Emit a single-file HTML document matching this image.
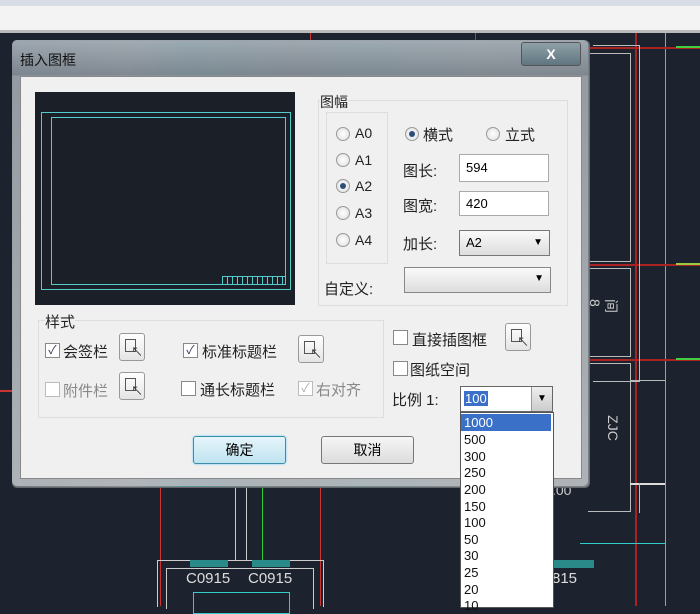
<!DOCTYPE html>
<html><head><meta charset="utf-8"><style>
body{margin:0;width:700px;height:606px;overflow:hidden;background:#1d232e;position:relative;font-family:"Liberation Sans","Noto Sans CJK SC",sans-serif;}
.a{position:absolute;}
.t{position:absolute;font-size:14px;color:#222;white-space:nowrap;}
.cb{position:absolute;width:13px;height:13px;border:1px solid #888;background:#fff;font-size:12px;line-height:13px;text-align:center;color:#335;}
.rb{position:absolute;width:12px;height:12px;border:1px solid #999;border-radius:50%;background:radial-gradient(#fff,#ddd);}
.rb.on::after{content:"";position:absolute;left:3px;top:3px;width:6px;height:6px;border-radius:50%;background:#2a4d7a;}
.in{position:absolute;background:#fff;border:1px solid #aaa;font-size:13px;padding-left:6px;box-sizing:border-box;}
.ib{position:absolute;width:24px;height:26px;border:1px solid #999;border-radius:3px;background:linear-gradient(#fff,#e4e4e4);}
.ib::before{content:"";position:absolute;left:5px;top:5px;width:9px;height:11px;border:1px solid #555;}
.ib::after{content:"↖";position:absolute;left:11px;top:9px;font-size:12px;color:#333;}
.dl{position:absolute;font-size:13px;left:464px;color:#111;}
</style></head><body>
<div class="a" style="left:0;top:0;width:700px;height:6px;background:#d8dce4"></div>
<div class="a" style="left:0;top:6px;width:700px;height:24px;background:#f3f3f3"></div>
<div class="a" style="left:0;top:30px;width:700px;height:3px;background:#bbb"></div>
<!-- cad lines -->
<div class="a" style="left:310px;top:33px;width:1px;height:10px;background:#c33"></div>
<div class="a" style="left:475px;top:33px;width:1px;height:10px;background:#c33"></div>
<div class="a" style="left:665px;top:33px;width:1px;height:573px;background:#3cc"></div>
<div class="a" style="left:635px;top:33px;width:2px;height:573px;background:#a22"></div>
<div class="a" style="left:588px;top:47px;width:112px;height:2px;background:#a22"></div>
<div class="a" style="left:588px;top:264px;width:112px;height:2px;background:#a22"></div>
<div class="a" style="left:588px;top:359px;width:112px;height:2px;background:#a22"></div>
<div class="a" style="left:676px;top:46px;width:24px;height:2px;background:#4c4"></div>
<div class="a" style="left:676px;top:263px;width:24px;height:2px;background:#9c4"></div>
<div class="a" style="left:676px;top:358px;width:24px;height:2px;background:#4c4"></div>
<div class="a" style="left:593px;top:45px;width:46px;height:335px;border:1px solid #bbb;border-left:none"></div>
<div class="a" style="left:588px;top:53px;width:42px;height:207px;border:1px solid #bbb;border-left:none"></div>
<div class="a" style="left:588px;top:268px;width:42px;height:87px;border:1px solid #bbb;border-left:none"></div>
<div class="a" style="left:588px;top:363px;width:42px;height:147px;border:1px solid #bbb;border-left:none"></div>
<div class="a" style="left:630px;top:380px;width:35px;height:1px;background:#bbb"></div>
<div class="a" style="left:630px;top:483px;width:35px;height:2px;background:#ddd"></div>
<div class="a" style="left:639px;top:483px;width:1px;height:30px;background:#bbb"></div>
<div class="a" style="left:580px;top:543px;width:85px;height:1px;background:#3cc"></div>
<div class="a" style="left:0;top:390px;width:12px;height:2px;background:#c33"></div>
<div class="t" style="left:596px;top:290px;color:#ccc;font-size:14px;line-height:16px;transform:rotate(90deg)">间<br>8</div>
<div class="t" style="left:600px;top:420px;color:#ccc;font-size:14px;transform:rotate(90deg)">ZJC</div>
<div class="a" style="left:160px;top:485px;width:1px;height:121px;background:#c33"></div>
<div class="a" style="left:235px;top:485px;width:10px;height:75px;border:1px solid #ccc;border-top:none"></div>
<div class="a" style="left:262px;top:485px;width:1px;height:75px;background:#3c3"></div>
<div class="a" style="left:320px;top:485px;width:1px;height:121px;background:#c33"></div>
<div class="a" style="left:157px;top:560px;width:165px;height:46px;border:1px solid #ccc;border-bottom:none"></div>
<div class="a" style="left:166px;top:568px;width:146px;height:40px;border:1px solid #ccc;border-bottom:none"></div>
<div class="a" style="left:190px;top:560px;width:38px;height:7px;background:#2a8a8a"></div>
<div class="a" style="left:252px;top:560px;width:38px;height:7px;background:#2a8a8a"></div>
<div class="t" style="left:186px;top:570px;color:#ddd;font-size:15px">C0915</div>
<div class="t" style="left:248px;top:570px;color:#ddd;font-size:15px">C0915</div>
<div class="a" style="left:193px;top:592px;width:95px;height:20px;border:1px solid #3cc"></div>
<div class="a" style="left:548px;top:560px;width:46px;height:8px;background:#2a8a8a"></div>
<div class="t" style="left:552px;top:570px;color:#ddd;font-size:15px">815</div>
<div class="t" style="left:552px;top:482px;color:#ccc;font-size:14px">.00</div>
<!-- dialog -->
<div class="a" style="left:12px;top:40px;width:576px;height:446px;border:1px solid #666;border-radius:5px;background:linear-gradient(90deg,#6c7a86,#8a8f96 20%,#5b8f9a 30%,#7a7f86 50%,#6a8f98 60%,#888d92 80%,#7a8088);"></div>
<div class="a" style="left:12px;top:40px;width:576px;height:446px;border-radius:5px;background:linear-gradient(#a7b0b8 0,#7f8890 35px,#9aa0a6 36px,#b8bcc0 100%);opacity:.85"></div>
<div class="t" style="left:20px;top:50px;color:#111;font-size:14px">插入图框</div>
<div class="a" style="left:521px;top:42px;width:58px;height:22px;border:1px solid #555;border-radius:3px;background:linear-gradient(#8fa0a8,#5f7680);color:#fff;font-weight:bold;text-align:center;font-size:14px;line-height:22px">X</div>
<div class="a" style="left:20px;top:76px;width:560px;height:401px;background:#f0f0f0;border:1px solid #888"></div>
<div class="a" style="left:35px;top:92px;width:260px;height:213px;background:#1b1f27"></div>
<div class="a" style="left:41px;top:112px;width:248px;height:176px;border:1px solid #5cc"></div>
<div class="a" style="left:51px;top:117px;width:233px;height:166px;border:1px solid #5cc"></div>
<div class="a" style="left:222px;top:276px;width:62px;height:7px;border:1px solid #5cc;background:repeating-linear-gradient(90deg,#1b1f27 0 4px,#5cc 4px 5px)"></div>
<!-- 图幅 group -->
<div class="a" style="left:318px;top:100px;width:248px;height:204px;border:1px solid #ddd"></div>
<div class="t" style="left:320px;top:92px;background:#f0f0f0">图幅</div>
<div class="a" style="left:326px;top:112px;width:60px;height:150px;border:1px solid #ddd"></div>
<div class="rb" style="left:336px;top:127px"></div><div class="t" style="left:355px;top:125px">A0</div>
<div class="rb" style="left:336px;top:153px"></div><div class="t" style="left:355px;top:152px">A1</div>
<div class="rb on" style="left:336px;top:179px"></div><div class="t" style="left:355px;top:178px">A2</div>
<div class="rb" style="left:336px;top:206px"></div><div class="t" style="left:355px;top:205px">A3</div>
<div class="rb" style="left:336px;top:233px"></div><div class="t" style="left:355px;top:232px">A4</div>
<div class="rb on" style="left:405px;top:127px"></div><div class="t" style="left:423px;top:124px;font-size:15px">横式</div>
<div class="rb" style="left:486px;top:127px"></div><div class="t" style="left:505px;top:124px;font-size:15px">立式</div>
<div class="t" style="left:403px;top:160px;font-size:15px">图长:</div>
<div class="in" style="left:459px;top:154px;width:90px;height:28px;line-height:26px">594</div>
<div class="t" style="left:403px;top:195px;font-size:15px">图宽:</div>
<div class="in" style="left:459px;top:191px;width:90px;height:25px;line-height:23px">420</div>
<div class="t" style="left:403px;top:233px;font-size:15px">加长:</div>
<div class="in" style="left:459px;top:230px;width:91px;height:26px;line-height:24px;background:linear-gradient(#fafafa,#ddd);border-color:#777">A2<span style="position:absolute;right:6px;font-size:10px">▼</span></div>
<div class="t" style="left:324px;top:278px;font-size:15px">自定义:</div>
<div class="in" style="left:404px;top:267px;width:147px;height:26px;background:linear-gradient(#fafafa,#ddd);border-color:#888"><span style="position:absolute;right:6px;top:5px;font-size:10px">▼</span></div>
<!-- 样式 -->
<div class="a" style="left:38px;top:320px;width:344px;height:96px;border:1px solid #ddd"></div>
<div class="t" style="left:45px;top:311px;background:#f0f0f0;font-size:15px">样式</div>
<div class="cb" style="left:45px;top:343px">✓</div><div class="t" style="left:63px;top:341px;font-size:15px">会签栏</div>
<div class="ib" style="left:119px;top:333px"></div>
<div class="cb" style="left:183px;top:343px">✓</div><div class="t" style="left:202px;top:341px;font-size:15px">标准标题栏</div>
<div class="ib" style="left:298px;top:335px"></div>
<div class="cb" style="left:45px;top:382px;border-color:#bbb"></div><div class="t" style="left:63px;top:380px;font-size:15px;color:#888">附件栏</div>
<div class="ib" style="left:119px;top:372px"></div>
<div class="cb" style="left:181px;top:381px"></div><div class="t" style="left:200px;top:379px;font-size:15px">通长标题栏</div>
<div class="cb" style="left:298px;top:381px;border-color:#bbb;color:#aaa">✓</div><div class="t" style="left:316px;top:379px;font-size:15px;color:#888">右对齐</div>
<div class="cb" style="left:393px;top:330px"></div><div class="t" style="left:412px;top:329px;font-size:15px">直接插图框</div>
<div class="ib" style="left:505px;top:323px"></div>
<div class="cb" style="left:393px;top:361px"></div><div class="t" style="left:410px;top:359px;font-size:15px">图纸空间</div>
<div class="t" style="left:392px;top:389px;font-size:15px">比例 1:</div>
<div class="in" style="left:460px;top:386px;width:93px;height:26px;border-color:#666"><span style="position:absolute;left:3px;top:4px;background:#3a70c8;color:#fff;padding:0 1px">100</span><span style="position:absolute;right:0;top:0;width:20px;height:24px;background:linear-gradient(#eee,#ccc);border-left:1px solid #999;font-size:10px;text-align:center;line-height:24px">▼</span></div>
<div class="a" style="left:193px;top:436px;width:91px;height:26px;border:1px solid #3a8fa8;border-radius:3px;background:linear-gradient(#e6f5fb,#bfe3f0);box-shadow:0 0 2px #6cf;text-align:center;line-height:26px;font-size:14px">确定</div>
<div class="a" style="left:321px;top:436px;width:91px;height:26px;border:1px solid #777;border-radius:3px;background:linear-gradient(#f6f6f6,#dcdcdc);text-align:center;line-height:26px;font-size:14px">取消</div>
<!-- dropdown list -->
<div class="a" style="left:460px;top:412px;width:92px;height:194px;background:#fff;border:1px solid #555"></div>
<div class="a" style="left:461px;top:414px;width:90px;height:17px;background:#3a70c8"></div>
<div class="dl" style="top:415px;color:#fff">1000</div>
<div class="dl" style="top:432px">500</div>
<div class="dl" style="top:449px">300</div>
<div class="dl" style="top:465px">250</div>
<div class="dl" style="top:482px">200</div>
<div class="dl" style="top:499px">150</div>
<div class="dl" style="top:515px">100</div>
<div class="dl" style="top:532px">50</div>
<div class="dl" style="top:548px">30</div>
<div class="dl" style="top:565px">25</div>
<div class="dl" style="top:582px">20</div>
<div class="dl" style="top:598px">10</div>
</body></html>
